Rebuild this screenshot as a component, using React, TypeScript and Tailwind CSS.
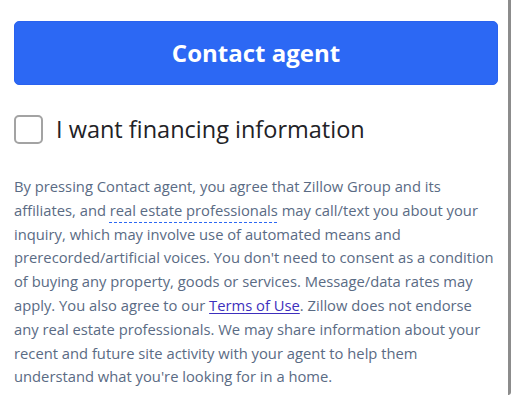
export default function App() {
  return (
    <div
      className="h-[395px] w-[511px] overflow-hidden rounded-br-[3px] border-r-[3px] border-[#8c8c8c] bg-white pl-[14px] pr-[8px] pt-[21px]"
      style={{ fontFamily: '"Open Sans", "Liberation Sans", sans-serif' }}
    >
      <button
        type="button"
        className="flex h-[64px] w-[484px] items-center justify-center rounded-[5px] border border-[#2a62ee] bg-[#2c68f4] text-[24px] font-bold text-white"
      >
        Contact agent
      </button>

      <label className="mt-[30px] flex h-[29px] items-center gap-[13px]">
        <span className="h-[29px] w-[29px] shrink-0 rounded-[5px] border-2 border-[#a3a3a3] bg-white" />
        <span className="text-[23.5px] leading-none text-[#222226]">
          I want financing information
        </span>
      </label>

      <p className="mt-[31px] text-[14.75px] leading-[23.8px] text-[#5a6b84]">
        By pressing Contact agent, you agree that Zillow Group and its affiliates, and{" "}
        <span className="underline decoration-dashed decoration-[#2c68f4] decoration-1 underline-offset-[6px]">
          real estate professionals
        </span>{" "}
        may call/text you about your inquiry, which may involve use of automated means and
        prerecorded/artificial voices. You don't need to consent as a condition of buying any
        property, goods or services. Message/data rates may apply. You also agree to our{" "}
        <a href="#" className="text-[#3d2fbd] underline underline-offset-2">
          Terms of Use
        </a>
        . Zillow does not endorse any real estate professionals. We may share information about
        your recent and future site activity with your agent to help them understand what you're
        looking for in a home.
      </p>
    </div>
  )
}
